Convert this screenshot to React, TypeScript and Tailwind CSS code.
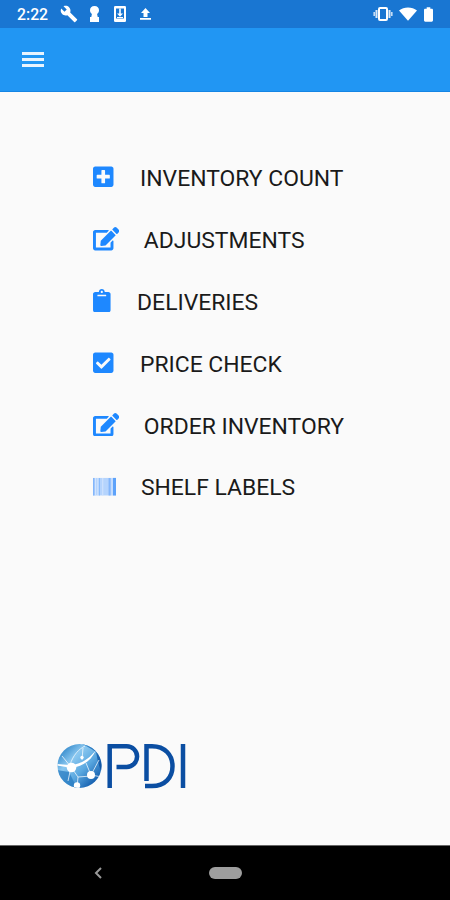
import React from 'react';
import { FaCheckSquare, FaClipboard, FaEdit, FaPlusSquare } from 'react-icons/fa';
import { MdBuild } from 'react-icons/md';

const Barcode: React.FC<{ className?: string }> = ({ className }) => (
  <svg className={className} viewBox="0 0 24 24">
    <rect y="3" width="24" height="18" fill="#b5d4fd" />
    <path d="M0 3h1.5v18H0zM6 3h1v18H6zM16 3h2v18h-2z" fill="#83b6fb" />
    <path d="M2 3h1v18H2zM4.5 3h1v18h-1zM9.5 3h1v18h-1zM19 3h1v18h-1z" fill="#d3e5fe" />
    <path d="M20.5 3H24v18h-3.5z" fill="#5da2fa" />
  </svg>
);

const menuItems = [
  { label: 'INVENTORY COUNT', icon: FaPlusSquare, iconClass: 'w-[20.5px]', labelClass: 'ml-[26.5px]' },
  { label: 'ADJUSTMENTS', icon: FaEdit, iconClass: 'w-[26.3px]', labelClass: 'ml-[24.5px]' },
  { label: 'DELIVERIES', icon: FaClipboard, iconClass: 'w-[17.6px]', labelClass: 'ml-[26.5px]' },
  { label: 'PRICE CHECK', icon: FaCheckSquare, iconClass: 'w-[20.5px]', labelClass: 'ml-[26.5px]' },
  { label: 'ORDER INVENTORY', icon: FaEdit, iconClass: 'w-[26.3px]', labelClass: 'ml-[24.5px]' },
  { label: 'SHELF LABELS', icon: Barcode, iconClass: 'w-[23.4px]', labelClass: 'ml-[24.5px]' },
];

const StatusBar: React.FC = () => (
  <div className="flex h-7 items-center bg-[#1976d2] pl-[17px] text-white">
    <span className="w-[43px] pt-[2px] text-[15.8px] font-medium leading-none">2:22</span>
    <MdBuild className="h-[18px] w-[18px]" />
    <svg className="ml-[11px] h-4 w-[11px]" viewBox="0 0 11 16" fill="currentColor">
      <path d="M5.5 0C8.4 0 10 2 10 4.2c0 1.700-.8 3-1.900 3.700L8.700 11H10v5H1v-5h1.300l.6-3.100C1.800 7.200 1 5.900 1 4.200 1 2 2.600 0 5.500 0z" />
    </svg>
    <svg className="ml-[14px] h-4 w-3" viewBox="0 0 12 16">
      <rect width="12" height="16" rx="1.3" fill="currentColor" />
      <path d="M2 2.5h8v10H2z" fill="#1976d2" />
      <path d="M5.2 2.5h1.6v5H9L6 10.7 3 7.5h2.2zM3 11h6v1H3z" fill="currentColor" />
    </svg>
    <svg className="ml-[14px] h-3 w-[11px]" viewBox="0 0 11 12" fill="currentColor">
      <path d="M5.5 0L10 5H7.5v4h-4V5H1zM0 10h11v1.8H0z" />
    </svg>
    <svg className="ml-auto h-4 w-5" viewBox="0 0 20 16" fill="none" stroke="currentColor">
      <rect x="6" y="2" width="8" height="12" rx="1" strokeWidth="2" />
      <path d="M3.5 4v8M16.5 4v8" strokeWidth="2" strokeOpacity="0.85" />
      <path d="M1.2 6v4M18.8 6v4" strokeWidth="1.6" strokeOpacity="0.75" />
    </svg>
    <svg className="ml-[6px] h-[14px] w-[18px]" viewBox="0 0 19 14" fill="currentColor">
      <path d="M9.5 14L0 3.2C5.2-.9 13.8-.9 19 3.2z" />
    </svg>
    <svg className="ml-[7px] mr-[17px] h-[15px] w-[9px]" viewBox="0 0 10 16" fill="currentColor">
      <path d="M3 0h4v1.7h1.6C9.4 1.7 10 2.3 10 3v11.5c0 .8-.6 1.5-1.4 1.5H1.4C.6 16 0 15.3 0 14.5V3c0-.7.6-1.3 1.4-1.3H3z" />
    </svg>
  </div>
);

const Logo: React.FC = () => (
  <svg className="h-[46px] w-[130px]" viewBox="0 0 130 46" fill="none">
    <defs>
      <linearGradient id="globe" x1="0.1" y1="0.1" x2="0.9" y2="0.9">
        <stop offset="0" stopColor="#2f86c9" />
        <stop offset="0.3" stopColor="#8bc8f0" />
        <stop offset="0.6" stopColor="#5aa8e0" />
        <stop offset="1" stopColor="#0b55a8" />
      </linearGradient>
      <linearGradient id="globeEdge" x1="0" y1="0" x2="1" y2="1">
        <stop offset="0" stopColor="#3f94d4" />
        <stop offset="1" stopColor="#0a4b9c" />
      </linearGradient>
      <clipPath id="globeClip">
        <circle cx="22.5" cy="23" r="22" />
      </clipPath>
    </defs>
    <circle cx="22.5" cy="23" r="22" fill="url(#globe)" />
    <g clipPath="url(#globeClip)">
      <path d="M22 0c10 0 18 5 23 14v15c-3-5-4-10-6-20C33 5 28 2 22 0z" fill="url(#globeEdge)" />
      <path d="M0 27l12 2 8 16H0z" fill="#2377bf" opacity="0.7" />
      <path
        d="M14 24L5 13M14 24l-3 14M14 24l7 10 13-1M34 32l-5-12M34 32l8-15M34 32l11 2M21 34l-1 11M13 22C16 12 22 6 28 3M26 5l-1 12"
        stroke="#fff"
        strokeOpacity="0.8"
        strokeWidth="0.9"
      />
      <path d="M0 21l12 1c11 0 20-6 27-15-5 11-13 16-24 18L0 22.5z" fill="#fff" />
      <circle cx="14.5" cy="24.5" r="4.8" fill="#fff" />
      <circle cx="34" cy="32" r="4" fill="#fff" />
      <circle cx="25" cy="14.5" r="1.7" fill="#fff" />
      <circle cx="20" cy="42.5" r="3.2" fill="#fff" />
    </g>
    {/* wordmark strokes */}
    <g stroke="#0b4ea2" strokeWidth="4.5">
      <path d="M52.7 45V3.2h17a10.4 10.4 0 0 1 0 20.8H59.5" />
      <path d="M89.5 38V3.2H95c13 0 20.5 8.8 20.5 20S108 43 95 43h-7" />
      <path d="M126 1v44" />
    </g>
  </svg>
);

const App: React.FC = () => {
  return (
    <div className="flex h-[900px] w-[450px] flex-col overflow-hidden bg-[#fafafa] font-[Roboto,sans-serif]">
      <StatusBar />
      <header className="flex h-16 items-center border-b border-[#1485e4] bg-[#2196f3] pl-[21.5px]">
        <button className="flex flex-col gap-[3px]" aria-label="Menu">
          <span className="h-[3px] w-[22px] bg-[#e8f4fe]" />
          <span className="h-[3px] w-[22px] bg-[#e8f4fe]" />
          <span className="h-[3px] w-[22px] bg-[#e8f4fe]" />
        </button>
      </header>

      <main className="flex flex-1 flex-col justify-between pb-14 pt-[54px]">
        <nav className="pl-[93px]">
          {menuItems.map(({ label, icon: Icon, iconClass, labelClass }) => (
            <a key={label} className="flex h-[61.9px] items-center">
              <Icon className={`h-[23.4px] shrink-0 text-[#1e88ff] ${iconClass}`} />
              <span className={`whitespace-nowrap pt-[5px] text-[22.9px] leading-none text-[#1a1a1a] ${labelClass}`}>
                {label}
              </span>
            </a>
          ))}
        </nav>
        <div className="pl-[57px]">
          <Logo />
        </div>
      </main>

      <footer className="flex h-[55px] items-center border-t border-[#666] bg-black pl-[94px]">
        <svg className="h-3 w-2" viewBox="0 0 8 12" fill="none" stroke="#999" strokeWidth="2">
          <path d="M7 1L2 6l5 5" />
        </svg>
        <span className="ml-[107px] h-3 w-[33px] rounded-full bg-[#9e9e9e]" />
      </footer>
    </div>
  );
};

export default App;
